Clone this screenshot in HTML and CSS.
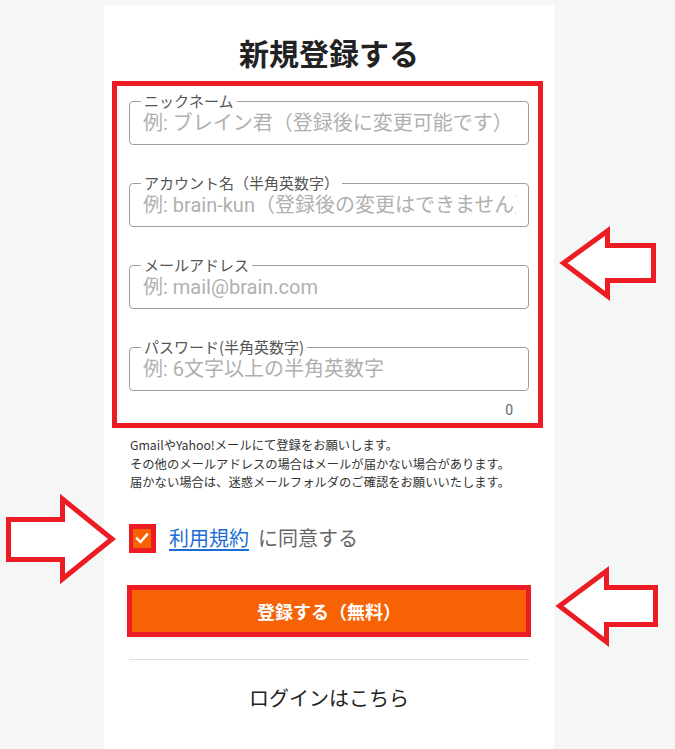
FILE: index.html
```html
<!DOCTYPE html>
<html lang="ja">
<head>
<meta charset="utf-8">
<title>新規登録する</title>
<link rel="stylesheet" href="styles.css">
</head>
<body>
<main class="card">
  <h1 class="title">新規登録する</h1>
  <div class="annot">
    <div class="field">
      <span class="label">ニックネーム</span>
      <input class="input" type="text" placeholder="例: ブレイン君（登録後に変更可能です）">
    </div>
    <div class="field">
      <span class="label">アカウント名（半角英数字）</span>
      <input class="input" type="text" placeholder="例: brain-kun（登録後の変更はできません）">
    </div>
    <div class="field">
      <span class="label">メールアドレス</span>
      <input class="input" type="text" placeholder="例: mail@brain.com">
    </div>
    <div class="field">
      <span class="label">パスワード(半角英数字)</span>
      <input class="input" type="password" placeholder="例: 6文字以上の半角英数字">
    </div>
    <div class="counter">0</div>
  </div>
  <p class="note">GmailやYahoo!メールにて登録をお願いします。<br>その他のメールアドレスの場合はメールが届かない場合があります。<br>届かない場合は、迷惑メールフォルダのご確認をお願いいたします。</p>
  <div class="agree">
    <span class="check-wrap"><span class="check"><svg width="18" height="18" viewBox="0 0 18 18"><polyline points="4,9.5 7.5,13 14,5.5" fill="none" stroke="#fff" stroke-width="2.4" stroke-linecap="square"/></svg></span></span>
    <a class="terms" href="#">利用規約</a><span class="agree-text">に同意する</span>
  </div>
  <button class="submit" type="button">登録する（無料）</button>
  <hr class="divider">
  <p class="login">ログインはこちら</p>
</main>
<svg class="arrows" width="675" height="749" viewBox="0 0 675 749">
  <polygon points="563.5,263 607.5,231 607.5,245.5 653.5,245.5 653.5,280.5 607.5,280.5 607.5,296" fill="#fff" stroke="#ed1c24" stroke-width="5" stroke-linejoin="miter"/>
  <polygon points="559.5,606 606.5,571 606.5,587.5 655.5,587.5 655.5,624.5 606.5,624.5 606.5,642" fill="#fff" stroke="#ed1c24" stroke-width="5" stroke-linejoin="miter"/>
  <polygon points="8.5,519.5 62.5,519.5 62.5,499 112,539 62.5,579 62.5,559.5 8.5,559.5" fill="#fff" stroke="#ed1c24" stroke-width="5" stroke-linejoin="miter"/>
</svg>
</body>
</html>
```
FILE: styles.css
```css
* { box-sizing: border-box; }
html, body { margin: 0; padding: 0; }
body {
  background: #f5f7f7;
  font-family: "Noto Sans CJK JP", "Noto Sans", sans-serif;
  color: #333;
  position: relative;
  min-height: 749px;
  overflow: hidden;
}
.card {
  width: 450px;
  margin: 5px 0 0 104px;
  min-height: 744px;
  background: #fff;
  padding: 27px 25px 0;
}
.title {
  margin: 0;
  font-size: 30px;
  line-height: 40px;
  font-weight: 700;
  text-align: center;
  color: #222;
}
.annot {
  margin: 9px -14px 0 -17px;
  border: 5px solid #ed1c24;
  padding: 15px 9px 3px 12px;
}
.field {
  position: relative;
  height: 44px;
  border: 1px solid #9e9e9e;
  border-radius: 4px;
  margin-bottom: 38px;
}
.field:nth-child(4) { margin-bottom: 0; }
.label {
  position: absolute;
  left: 11px;
  top: -9px;
  padding: 0 3px;
  background: #fff;
  font-size: 15px;
  line-height: 16px;
  color: #555;
  white-space: nowrap;
}
.input {
  display: block;
  width: 100%;
  height: 100%;
  border: 0;
  outline: none;
  background: transparent;
  padding: 0 12px 0 13px;
  font-family: Roboto, "Noto Sans CJK JP", sans-serif;
  font-size: 20px;
  color: #333;
}
.input::placeholder { color: #b0b0b0; opacity: 1; }
.counter {
  margin-top: 9px;
  width: 400px;
  text-align: right;
  padding-right: 16px;
  font-family: Roboto, sans-serif;
  font-size: 14px;
  line-height: 20px;
  color: #666;
}
.note {
  margin: 8px 0 0;
  padding-left: 1px;
  font-size: 12.3px;
  line-height: 18.5px;
  color: #333;
  white-space: nowrap;
}
.agree {
  margin-top: 32px;
  display: flex;
  align-items: center;
  height: 29px;
}
.check-wrap {
  display: inline-flex;
  border: 5px solid #ed1c24;
  border-width: 5px 5px 5px 4px;
}
.check {
  display: block;
  width: 18px;
  height: 19px;
  background: #f76205;
}
.check svg { display: block; }
.terms {
  margin-left: 13px;
  font-size: 20px;
  line-height: 28px;
  color: #1c6fd2;
  text-decoration: underline;
  text-underline-offset: 3px;
}
.agree-text {
  margin-left: 9px;
  font-size: 20px;
  line-height: 28px;
  color: #666;
}
.submit {
  display: block;
  margin: 32px 0 0 -2px;
  width: 404px;
  height: 52px;
  border: 5px solid #ed1c24;
  background: #f76205;
  color: #fff;
  font-family: "Noto Sans CJK JP", sans-serif;
  font-size: 18px;
  font-weight: 700;
  cursor: pointer;
}
.divider {
  margin: 22px 0 0;
  border: 0;
  border-top: 1px solid #ddd;
  height: 0;
}
.login {
  margin: 24px 0 0;
  text-align: center;
  font-size: 20px;
  line-height: 28px;
  color: #222;
}
.arrows {
  position: absolute;
  left: 0;
  top: 0;
  pointer-events: none;
}
```
